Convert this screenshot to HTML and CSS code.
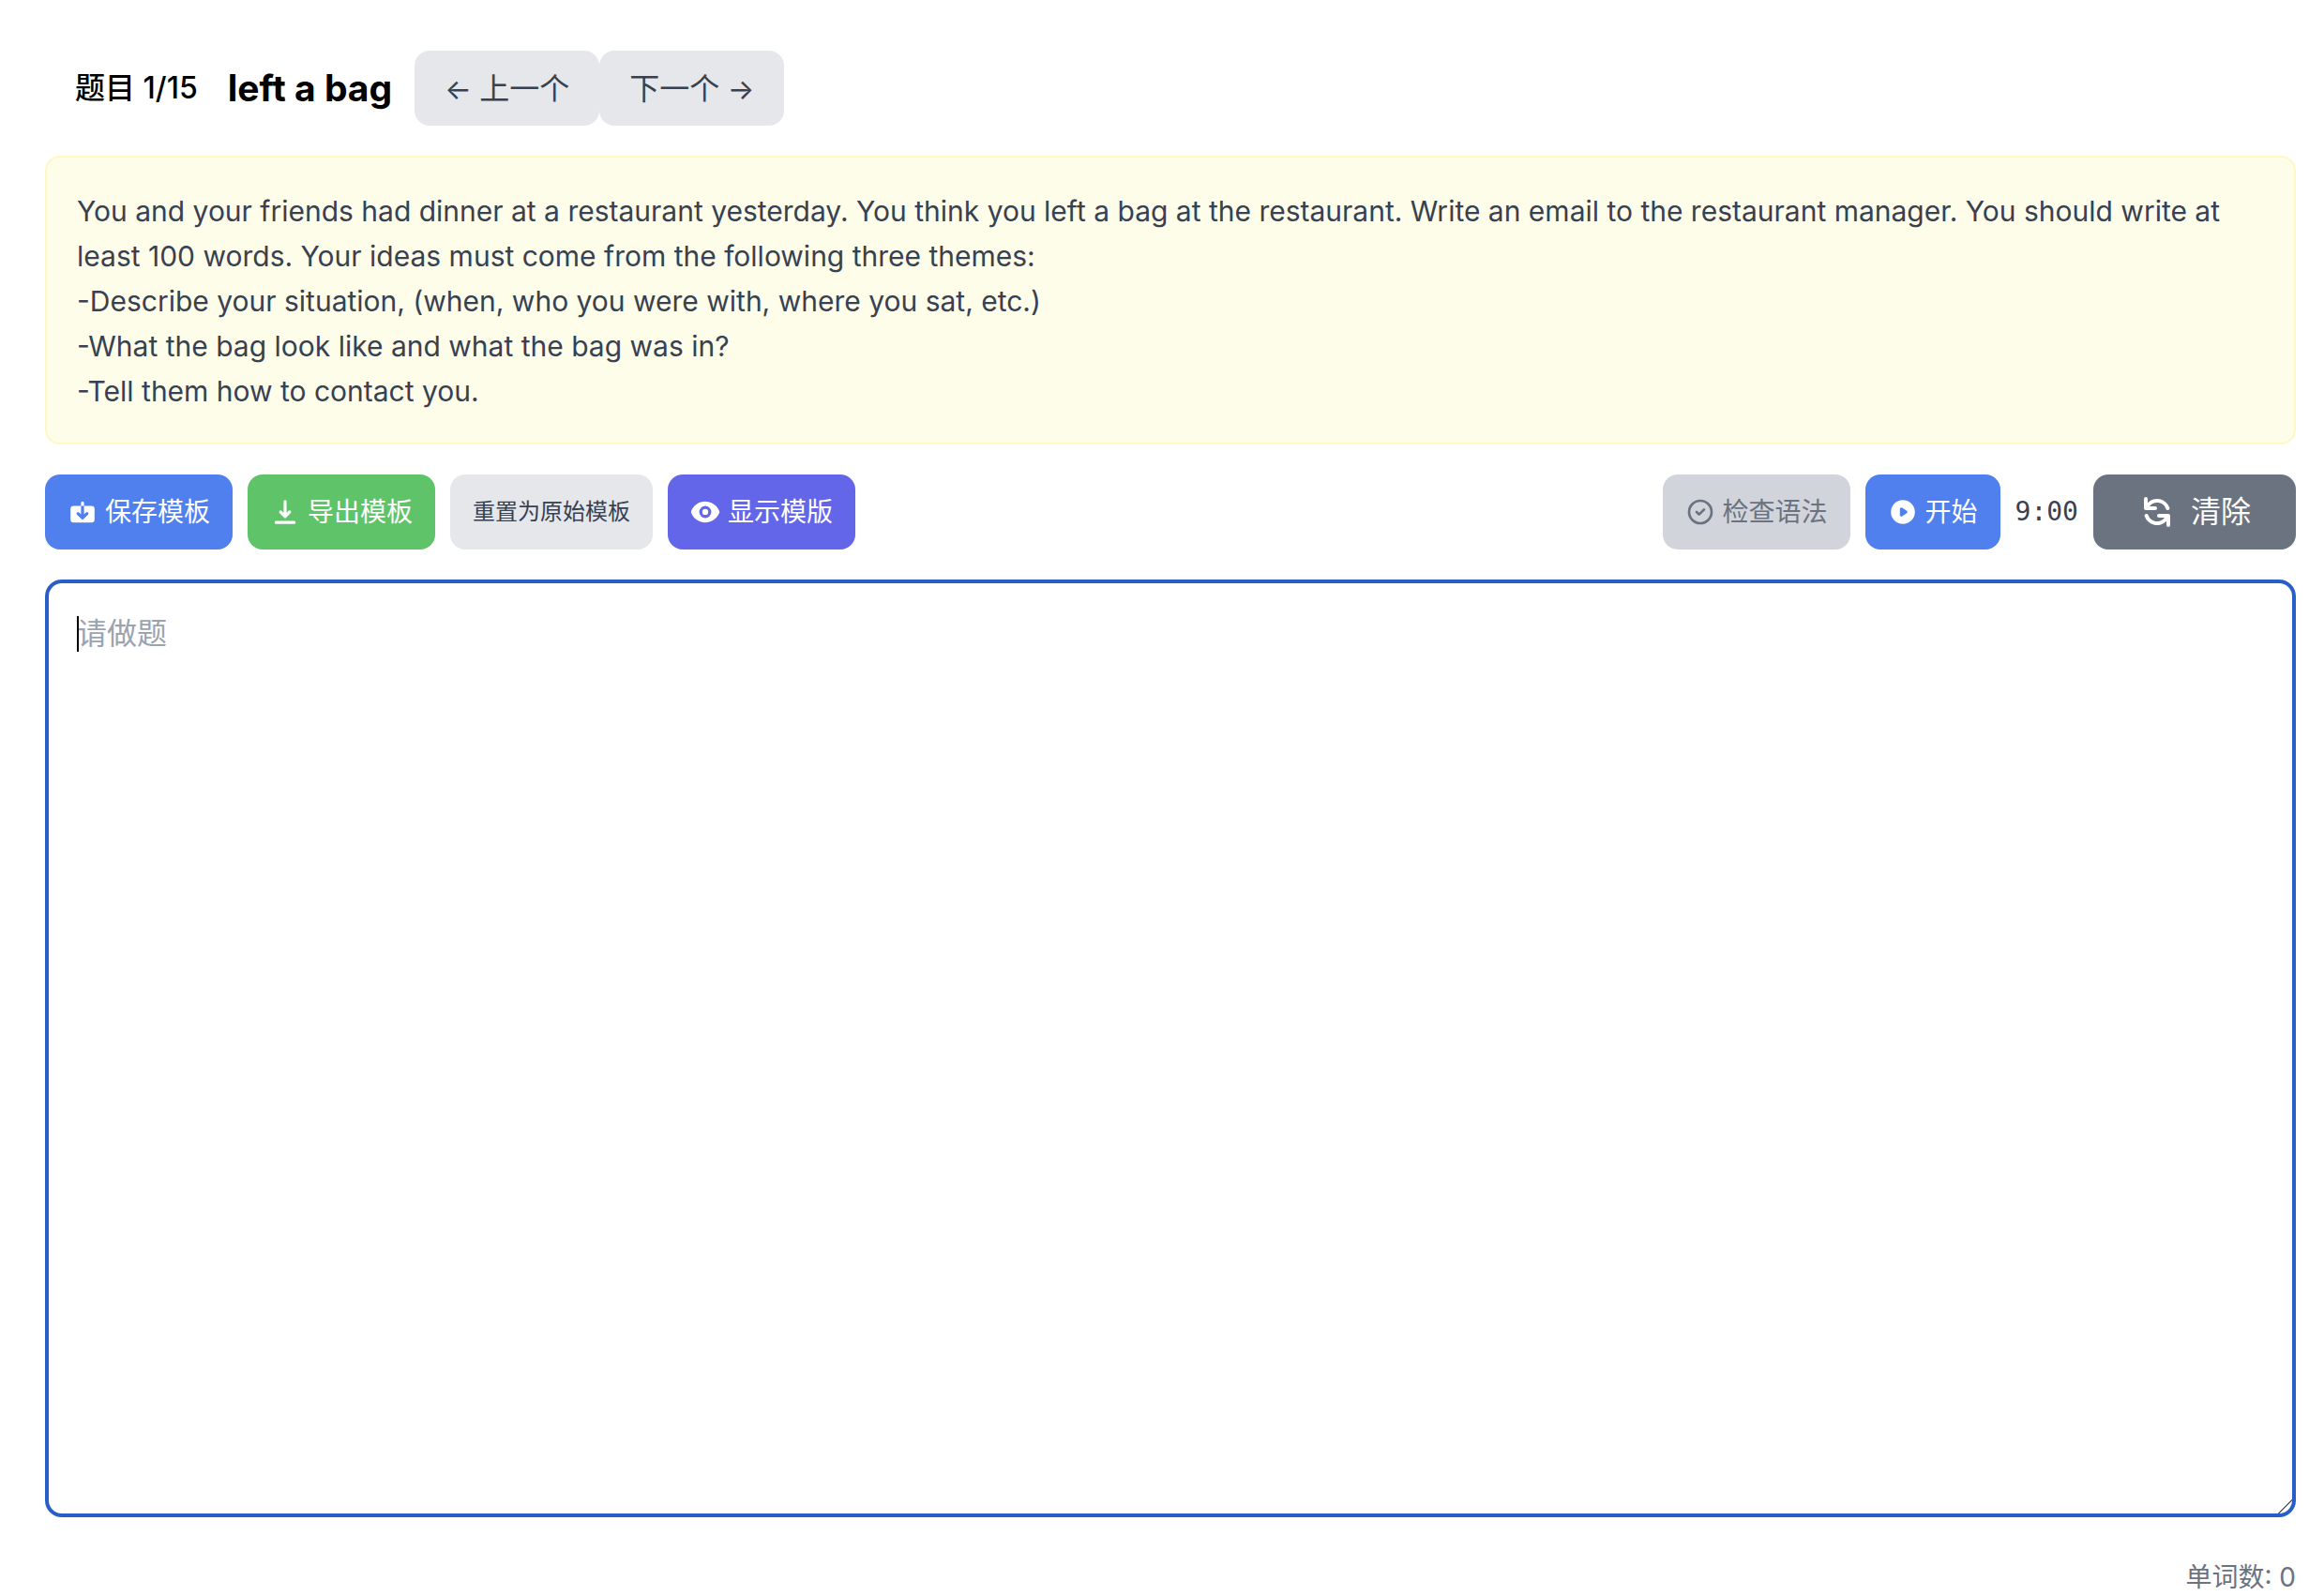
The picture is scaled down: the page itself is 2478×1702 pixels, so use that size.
FILE: index.html
```
<!DOCTYPE html>
<html lang="zh-CN">
<head>
  <meta charset="UTF-8">
  <title>left a bag</title>
  <link rel="stylesheet" href="styles.css">
</head>
<body>

  <header class="header">
    <span class="counter">题目 1/15</span>
    <h1>left a bag</h1>
    <nav class="pager">
      <button class="btn btn-nav" type="button"><span><span class="arrow">← </span>上一个</span></button>
      <button class="btn btn-nav" type="button"><span>下一个<span class="arrow"> →</span></span></button>
    </nav>
  </header>

  <section class="question">You and your friends had dinner at a restaurant yesterday. You think you left a bag at the restaurant. Write an email to the restaurant manager. You should write at least 100 words. Your ideas must come from the following three themes:
-Describe your situation, (when, who you were with, where you sat, etc.)
-What the bag look like and what the bag was in?
-Tell them how to contact you.</section>

  <div class="toolbar">
    <div class="group">
      <button class="btn blue" type="button">
        <svg class="icon" viewBox="0 0 20 20" fill="currentColor"><path d="M7.707 10.293a1 1 0 10-1.414 1.414l3 3a1 1 0 001.414 0l3-3a1 1 0 00-1.414-1.414L11 11.586V6h5a2 2 0 012 2v7a2 2 0 01-2 2H4a2 2 0 01-2-2V8a2 2 0 012-2h5v5.586l-1.293-1.293zM9 4a1 1 0 012 0v2H9V4z"/></svg>
        保存模板
      </button>
      <button class="btn green" type="button">
        <svg class="icon" viewBox="0 0 20 20" fill="currentColor"><path fill-rule="evenodd" d="M3 17a1 1 0 011-1h12a1 1 0 110 2H4a1 1 0 01-1-1zm3.293-7.707a1 1 0 011.414 0L9 10.586V3a1 1 0 112 0v7.586l1.293-1.293a1 1 0 111.414 1.414l-3 3a1 1 0 01-1.414 0l-3-3a1 1 0 010-1.414z"/></svg>
        导出模板
      </button>
      <button class="btn btn-reset" type="button">重置为原始模板</button>
      <button class="btn indigo" type="button">
        <svg class="icon" viewBox="0 0 20 20" fill="currentColor"><path d="M10 12a2 2 0 100-4 2 2 0 000 4z"/><path fill-rule="evenodd" d="M.458 10C1.732 5.943 5.522 3 10 3s8.268 2.943 9.542 7c-1.274 4.057-5.064 7-9.542 7S1.732 14.057.458 10zM14 10a4 4 0 11-8 0 4 4 0 018 0z"/></svg>
        显示模版
      </button>
    </div>

    <div class="group">
      <button class="btn btn-check" type="button" disabled>
        <svg class="icon" viewBox="0 0 24 24" fill="none" stroke="currentColor" stroke-width="2" stroke-linecap="round" stroke-linejoin="round"><path d="M9 12l2 2 4-4m6 2a9 9 0 11-18 0 9 9 0 0118 0z"/></svg>
        检查语法
      </button>
      <button class="btn blue" type="button">
        <svg class="icon" viewBox="0 0 20 20" fill="currentColor"><path fill-rule="evenodd" d="M10 18a8 8 0 100-16 8 8 0 000 16zM9.555 7.168A1 1 0 008 8v4a1 1 0 001.555.832l3-2a1 1 0 000-1.664l-3-2z"/></svg>
        开始
      </button>
      <span class="timer">9:00</span>
      <button class="btn btn-clear" type="button">
        <svg class="icon" viewBox="0 0 20 20" fill="currentColor"><path fill-rule="evenodd" d="M4 2a1 1 0 011 1v2.101a7.002 7.002 0 0111.601 2.566 1 1 0 11-1.885.666A5.002 5.002 0 005.999 7H9a1 1 0 010 2H4a1 1 0 01-1-1V3a1 1 0 011-1zm.008 9.057a1 1 0 011.276.61A5.002 5.002 0 0014.001 13H11a1 1 0 110-2h5a1 1 0 011 1v5a1 1 0 11-2 0v-2.101a7.002 7.002 0 01-11.601-2.566 1 1 0 01.61-1.276z"/></svg>
        清除
      </button>
    </div>
  </div>

  <div class="editor">
    <textarea class="answer" aria-label="请做题" placeholder="请做题" autofocus></textarea>
  </div>

  <footer class="word-count">单词数: <span id="count">0</span></footer>

  <script>
    const answer = document.querySelector(".answer");
    const count = document.getElementById("count");

    answer.addEventListener("input", () => {
      count.textContent = answer.value.split(/\s+/).filter(Boolean).length;
    });
    answer.focus();
  </script>

</body>
</html>
```
FILE: styles.css
```
* {
  box-sizing: border-box;
}

body {
  margin: 0;
  padding: 54px 30px 0 48px;
  background: #fff;
  color: #000;
  font-family: Inter, "Noto Sans CJK SC", sans-serif;
  font-size: 32px;
  line-height: 48px;
}

.header {
  display: flex;
  align-items: center;
  padding-left: 32px;
  margin-bottom: 32px;
}

.counter {
  font-weight: 500;
  margin-right: 32px;
}

h1 {
  margin: 0 24px 0 0;
  font-size: 39px;
  font-weight: 700;
}

.pager {
  display: flex;
}

.btn {
  display: flex;
  align-items: center;
  gap: 8px;
  height: 80px;
  padding: 0 24px;
  border: none;
  border-radius: 16px;
  color: #fff;
  font-family: inherit;
  font-size: 28px;
  line-height: 40px;
  white-space: nowrap;
  cursor: pointer;
}

.btn-nav {
  padding: 2px 32px 0;
  background: #e5e7eb;
  color: #374151;
  font-size: 32px;
}

.arrow {
  font-size: 30px;
}

.icon {
  width: 32px;
  height: 32px;
}

.blue {
  background: #4f80ee;
}

.green {
  background: #5fc369;
}

.indigo {
  background: #6466e9;
}

.btn-reset {
  background: #e5e7eb;
  color: #374151;
  font-size: 24px;
}

.btn-check {
  background: #d1d5db;
  color: #6b7280;
  cursor: not-allowed;
}

.btn-clear {
  gap: 16px;
  padding: 0 48px;
  background: #6b7280;
  font-size: 32px;
}

.btn-clear .icon {
  width: 40px;
  height: 40px;
}

.question {
  margin-bottom: 32px;
  padding: 33px 32px 31px;
  border: 2px solid #fef9c3;
  border-radius: 16px;
  background: #fefdea;
  color: #374151;
  font-size: 30px;
  white-space: pre-wrap;
}

.toolbar {
  display: flex;
  justify-content: space-between;
  margin-bottom: 32px;
}

.group {
  display: flex;
  align-items: center;
  gap: 16px;
}

.timer {
  color: #374151;
  font-family: "DejaVu Sans Mono", monospace;
  font-size: 28px;
}

.editor {
  position: relative;
}

.answer {
  display: block;
  width: 100%;
  height: 1000px;
  padding: 30px;
  border: 4px solid #285ec8;
  border-radius: 18px;
  outline: none;
  background: #fff;
  color: #000;
  font: inherit;
  resize: vertical;
}

.answer::placeholder {
  color: #9ca3af;
}

.answer::-webkit-resizer {
  background: linear-gradient(135deg, transparent 48%, #666 48%, #666 54%, transparent 54%);
}

/* steady cursor while the answer is still empty */
.answer:placeholder-shown {
  caret-color: transparent;
}

.editor:has(.answer:placeholder-shown)::before {
  content: "";
  position: absolute;
  top: 39px;
  left: 34px;
  width: 2px;
  height: 38px;
  background: #000;
}

.word-count {
  margin-top: 44px;
  color: #6b7280;
  font-size: 28px;
  line-height: 40px;
  text-align: right;
}
```
